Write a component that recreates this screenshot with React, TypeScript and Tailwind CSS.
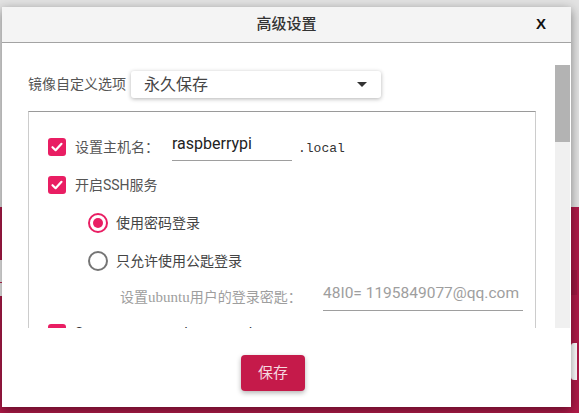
import React from 'react';

const Check: React.FC = () => (
  <div className="w-[18px] h-[18px] rounded-[3px] bg-[#e91e63] flex items-center justify-center shrink-0">
    <svg width="14" height="14" viewBox="0 0 14 14">
      <polyline points="2.5,7.2 5.6,10.2 11.5,3.8" fill="none" stroke="white" strokeWidth="2.2" strokeLinecap="round" strokeLinejoin="round" />
    </svg>
  </div>
);

const Radio: React.FC<{ on?: boolean }> = ({ on }) => (
  <div
    className={
      on
        ? 'w-[20px] h-[20px] rounded-full border-2 border-[#e91e63] flex items-center justify-center shrink-0'
        : 'w-[20px] h-[20px] rounded-full border-2 border-[#757575] flex items-center justify-center shrink-0'
    }
  >
    {on && <div className="w-[10px] h-[10px] rounded-full bg-[#e91e63]" />}
  </div>
);

const App: React.FC = () => {
  return (
    <div className="relative w-[579px] h-[413px] overflow-hidden font-['Roboto','Noto_Sans_CJK_SC',sans-serif]">
      {/* app behind the dialog */}
      <div className="flex flex-col h-full">
        <div className="h-[207px] bg-[#e2e2e2]" />
        <div className="flex-1 bg-[#ae1a48] flex flex-col">
          <div className="flex justify-between items-start">
            <div className="mt-[53px] w-[200px] h-[36px] bg-[#ececec] flex flex-col">
              <div className="h-[22px]" />
              <div className="h-px bg-[#c0284f]" />
            </div>
            <div className="mt-[63px] w-[6px] h-[25px] bg-[#9c1741] mr-[2px]" />
          </div>
          <div className="self-end mt-[47px] w-[6px] h-[37px] bg-white rounded-l-[3px] mr-[2px]" />
        </div>
      </div>

      {/* dialog */}
      <div className="absolute left-[2px] top-[7px] w-[569px] h-[400px] bg-white flex flex-col shadow-[0_3px_10px_rgba(0,0,0,0.45)]">
        <div className="h-[36px] bg-[#f4f4f4] border-b border-[#a3a3a3] grid grid-cols-[1fr_auto_1fr] items-center">
          <div />
          <div className="text-[15px] font-medium text-[#333]">高级设置</div>
          <div className="justify-self-end pr-[25px] text-[15px] font-bold text-[#111] font-['Liberation_Sans',sans-serif]">X</div>
        </div>

        <div className="flex-1 flex flex-col pt-[22px]">
          <div className="h-[263px] flex">
            <div className="flex-1 overflow-hidden pl-[26px] pr-[19px] pt-[6px]">
              <div className="flex items-center">
                <span className="text-[14px] text-[#555]">镜像自定义选项</span>
                <div className="ml-[5px] w-[250px] h-[27px] rounded-[3px] bg-white shadow-[0_1px_4px_rgba(0,0,0,0.3)] flex items-center justify-between pl-[13px] pr-[14px]">
                  <span className="text-[16px] text-[#444]">永久保存</span>
                  <svg width="10" height="5" viewBox="0 0 10 5">
                    <polygon points="0,0 10,0 5,5" fill="#333" />
                  </svg>
                </div>
              </div>

              <div className="mt-[13px] border border-[#cccccc] border-t-[#9a9a9a] pt-[16px] pb-[20px]">
                <div className="h-[38px] flex items-center pl-[19px]">
                  <Check />
                  <span className="ml-[9px] text-[14px] text-[#555]">设置主机名：</span>
                  <div className="ml-[13px] w-[120px] h-[28px] border-b border-[#9e9e9e] text-[16px] leading-[20px] text-[#222] pt-[1px]">raspberrypi</div>
                  <span className="ml-[6px] text-[13px] text-[#333] font-['Liberation_Mono',monospace] mt-[3px]">.local</span>
                </div>

                <div className="h-[38px] flex items-center pl-[19px]">
                  <Check />
                  <span className="ml-[9px] text-[14px] text-[#555]">开启SSH服务</span>
                </div>

                <div className="h-[38px] flex items-center pl-[59px]">
                  <Radio on />
                  <span className="ml-[8px] text-[14px] text-[#444]">使用密码登录</span>
                </div>

                <div className="h-[38px] flex items-center pl-[59px]">
                  <Radio />
                  <span className="ml-[8px] text-[14px] text-[#444]">只允许使用公匙登录</span>
                </div>

                <div className="h-[34px] flex items-center pl-[91px]">
                  <span className="w-[203px] text-[14px] text-[#9e9e9e] whitespace-nowrap">
                    设置<span className="font-['Liberation_Serif',serif] text-[15px]">ubuntu</span>用户的登录密匙：
                  </span>
                  <div className="w-[200px] h-[28px] border-b border-[#9e9e9e] text-[15.5px] leading-[20px] text-[#9e9e9e] whitespace-nowrap">48I0= 1195849077@qq.com</div>
                </div>

                <div className="h-[38px] flex items-center pl-[19px]">
                  <Check />
                  <span className="ml-[9px] text-[14px] text-[#333]">Set username and password</span>
                </div>
              </div>
            </div>
            <div className="w-[15px] mr-[1px] bg-[#f0f0f0] flex flex-col">
              <div className="h-[77px] bg-[#b3b3b3]" />
            </div>
          </div>

          <div className="flex-1 flex justify-center pr-[27px]">
            <button className="mt-[27px] w-[64px] h-[36px] rounded-[4px] bg-[#c51a4a] text-[15px] text-[#f5d8e0] shadow-[0_2px_5px_rgba(0,0,0,0.3)]">
              保存
            </button>
          </div>
        </div>
      </div>
    </div>
  );
};

export default App;
